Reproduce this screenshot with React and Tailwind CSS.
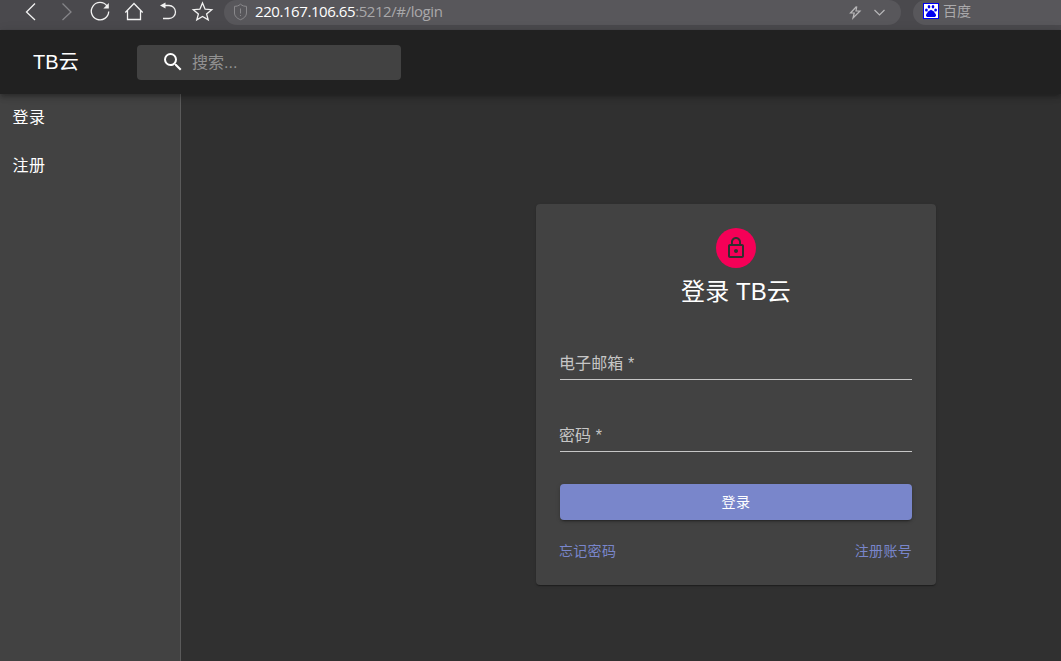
import React, { useState } from "react";
import { MdLockOutline, MdSearch } from "react-icons/md";

const stroke = {
  fill: "none",
  stroke: "currentColor",
  strokeWidth: 1.3,
};

function BrowserBar() {
  return (
    <div className="h-[30px] bg-[#4a494d] flex items-start text-[#f2f2f2] overflow-hidden">
      <div className="w-[224px] h-[24px] shrink-0">
        <svg width="224" height="24" viewBox="0 0 224 24" {...stroke}>
          <path d="M35 3.5L26.5 12L35 20" />
          <path d="M62.5 3.5L71 12L62.5 20" stroke="#858488" />
          <path d="M107 6A8.7 8.7 0 1 0 108.7 11.5" />
          <path d="M108.8 3V8.5H103.3Z" fill="currentColor" stroke="none" />
          <path d="M125.3 12.5L134 3.5L142.7 12.5M127.5 10.5V19.5H140.5V10.5" />
          <path d="M163 5.5H169A6.5 6.5 0 0 1 169 18.5H163" />
          <path d="M165.5 2.5V8.5L160 5.5Z" fill="currentColor" stroke="none" />
          <path d="M202.5 3L205.1 9.2L211.7 9.7L206.6 13.9L208.2 19.8L202.5 16.4L196.8 19.8L198.4 13.9L193.3 9.7L199.9 9.2Z" />
        </svg>
      </div>

      <div className="w-[677px] h-[25px] shrink-0 bg-[#58575b] rounded-b-[13px] rounded-tl-[12px] rounded-tr-[12px] flex items-start">
        <svg className="ml-[9px] text-[#89888b]" width="15" height="24" viewBox="0 0 15 24" {...stroke} strokeWidth="1">
          <path d="M7.5 4.2C5.5 6 3.5 6.3 1.5 6.3V13C1.5 16 4 18.5 7.5 19.7C11 18.5 13.5 16 13.5 13V6.3C11.5 6.3 9.5 6 7.5 4.2ZM7.5 8.5V13.5M7.5 15V16" />
        </svg>
        <div className="ml-[7px] font-['Open_Sans',sans-serif] text-[15px] leading-[22px] tracking-[-0.43px] text-[#a9a8aa]">
          <span className="text-white">220.167.106.65</span>:5212/#/login
        </div>
        <svg className="ml-auto mr-[9px] text-[#b8b7b9]" width="44" height="24" viewBox="0 0 44 24" {...stroke} strokeWidth="1.2">
          <path d="M8.5 6.5L2.5 13H6.2L5 18L12 11H8L8.8 6.5" />
          <path d="M26.5 10L31.5 15L36.5 10" />
        </svg>
      </div>

      <div className="ml-[12px] w-[148px] h-[25px] shrink-0 bg-[#58575b] rounded-l-[13px] flex items-start pl-[10px]">
        <svg className="mt-[3px]" width="16" height="16" viewBox="0 0 16 16">
          <rect x="0.5" y="0.5" width="15" height="15" fill="#fff" stroke="#0000f0" />
          <g fill="#0000f0">
            <ellipse cx="6" cy="3.8" rx="1.3" ry="1.7" />
            <ellipse cx="10" cy="3.8" rx="1.3" ry="1.7" />
            <ellipse cx="3.4" cy="7" rx="1.4" ry="1.5" />
            <ellipse cx="12.6" cy="7" rx="1.4" ry="1.5" />
            <path d="M8 6.8L10.5 8.3L13 11.5V13L11.8 14H4.2L3 13V11.5L5.5 8.3Z" />
          </g>
        </svg>
        <span className="ml-[4px] text-[14px] leading-[23px] text-[#aaa9ab]">百度</span>
      </div>
    </div>
  );
}

function Field({ label, type, value, onChange }) {
  return (
    <label className="relative block h-[48px] border-b border-[#c6c6c6]">
      {!value && (
        <span className="absolute -left-px top-[20px] text-[16px] leading-[24px] tracking-[0.1px] text-[#c6c6c6]">
          {label} *
        </span>
      )}
      <input
        type={type}
        className="w-full mt-4 h-[31px] bg-transparent outline-none text-white"
        value={value}
        onChange={onChange}
      />
    </label>
  );
}

export default function App() {
  const [email, setEmail] = useState("");
  const [password, setPassword] = useState("");

  return (
    <div className="h-[661px] flex flex-col overflow-hidden bg-[#303030] text-white font-['Liberation_Sans','Noto_Sans_CJK_SC',sans-serif]">
      <BrowserBar />

      {/* APP BAR */}
      <header className="relative z-10 h-[64px] shrink-0 bg-[#212121] flex items-center shadow-[0_2px_4px_-1px_rgba(0,0,0,0.2),0_4px_5px_0_rgba(0,0,0,0.14),0_1px_10px_0_rgba(0,0,0,0.12)]">
        <h1 className="w-[104px] ml-[33px] text-[20px] leading-[32px] tracking-[0.15px]">TB云</h1>
        <div className="w-[264px] h-[35px] rounded-[4px] bg-[#424242] flex items-center pl-[24px]">
          <MdSearch size={24} />
          <input
            type="text"
            placeholder="搜索..."
            className="ml-[7px] mt-px w-[180px] bg-transparent outline-none text-[16px] placeholder:text-[#929292]"
          />
        </div>
      </header>

      <div className="flex flex-1 min-h-0">
        <nav className="w-[181px] shrink-0 bg-[#424242] border-r border-[#5a5a5a] text-[16px] tracking-[0.5px]">
          <a className="h-[48px] pl-[12.5px] flex items-center">登录</a>
          <a className="h-[48px] pl-[12.5px] flex items-center">注册</a>
        </nav>

        <main className="flex-1">
          <div className="mt-[110px] ml-[355px] w-[400px] h-[381px] px-6 pt-6 bg-[#424242] rounded-[4px] shadow-[0_2px_1px_-1px_rgba(0,0,0,0.2),0_1px_1px_0_rgba(0,0,0,0.14),0_1px_3px_0_rgba(0,0,0,0.12)]">
            <div className="mx-auto w-[40px] h-[40px] rounded-full bg-[#f50057] text-[#303030] flex items-center justify-center">
              <MdLockOutline size={24} />
            </div>
            <h2 className="mt-[8px] text-[24px] leading-[32px] tracking-[0.1px] text-center">登录 TB云</h2>

            <div className="mt-[24px] space-y-[24px]">
              <Field label="电子邮箱" type="email" value={email} onChange={(e) => setEmail(e.target.value)} />
              <Field label="密码" type="password" value={password} onChange={(e) => setPassword(e.target.value)} />
            </div>

            <button className="mt-[32px] w-full h-[36px] rounded-[4px] bg-[#7986cb] text-[14px] tracking-[0.4px] shadow-[0_3px_1px_-2px_rgba(0,0,0,0.2),0_2px_2px_0_rgba(0,0,0,0.14),0_1px_5px_0_rgba(0,0,0,0.12)]">
              登录
            </button>

            <div className="-ml-px mt-[21px] flex justify-between text-[14px] leading-[20px] tracking-[0.3px] text-[#7986cb]">
              <a>忘记密码</a>
              <a>注册账号</a>
            </div>
          </div>
        </main>
      </div>
    </div>
  );
}
